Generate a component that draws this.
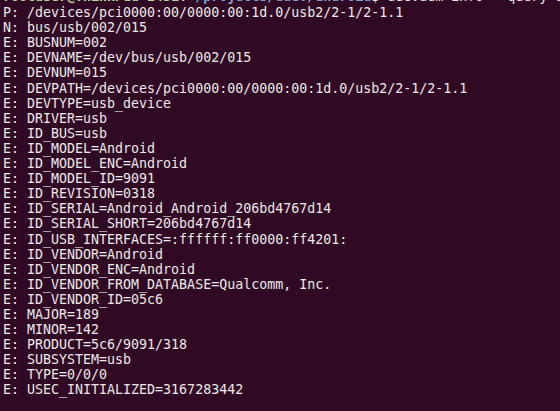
const lines: string[] = [
  "P: /devices/pci0000:00/0000:00:1d.0/usb2/2-1/2-1.1",
  "N: bus/usb/002/015",
  "E: BUSNUM=002",
  "E: DEVNAME=/dev/bus/usb/002/015",
  "E: DEVNUM=015",
  "E: DEVPATH=/devices/pci0000:00/0000:00:1d.0/usb2/2-1/2-1.1",
  "E: DEVTYPE=usb_device",
  "E: DRIVER=usb",
  "E: ID_BUS=usb",
  "E: ID_MODEL=Android",
  "E: ID_MODEL_ENC=Android",
  "E: ID_MODEL_ID=9091",
  "E: ID_REVISION=0318",
  "E: ID_SERIAL=Android_Android_206bd4767d14",
  "E: ID_SERIAL_SHORT=206bd4767d14",
  "E: ID_USB_INTERFACES=:ffffff:ff0000:ff4201:",
  "E: ID_VENDOR=Android",
  "E: ID_VENDOR_ENC=Android",
  "E: ID_VENDOR_FROM_DATABASE=Qualcomm, Inc.",
  "E: ID_VENDOR_ID=05c6",
  "E: MAJOR=189",
  "E: MINOR=142",
  "E: PRODUCT=5c6/9091/318",
  "E: SUBSYSTEM=usb",
  "E: TYPE=0/0/0",
  "E: USEC_INITIALIZED=3167283442",
];

export default function App() {
  return (
    <div className="w-[560px] h-[411px] overflow-hidden bg-[#300a24] text-[#ece7ea] pl-[3px] font-['DejaVu_Sans_Mono',monospace] text-[13.3px] leading-[15.1px] whitespace-pre">
      {/* prompt line, mostly scrolled off the top */}
      <div className="mt-[-11px] mb-[1px]">
        <span className="text-[#b6d99a] font-bold">rootuser@ThinkPad-E431</span>
        <span>:</span>
        <span className="text-[#7f9fd0] font-bold">~/projects/udev/android</span>
        <span>$ udevadm info --query=all --name=/dev/bus/usb</span>
      </div>
      {lines.map((l, i) => (
        <div key={i}>{l}</div>
      ))}
    </div>
  );
}
